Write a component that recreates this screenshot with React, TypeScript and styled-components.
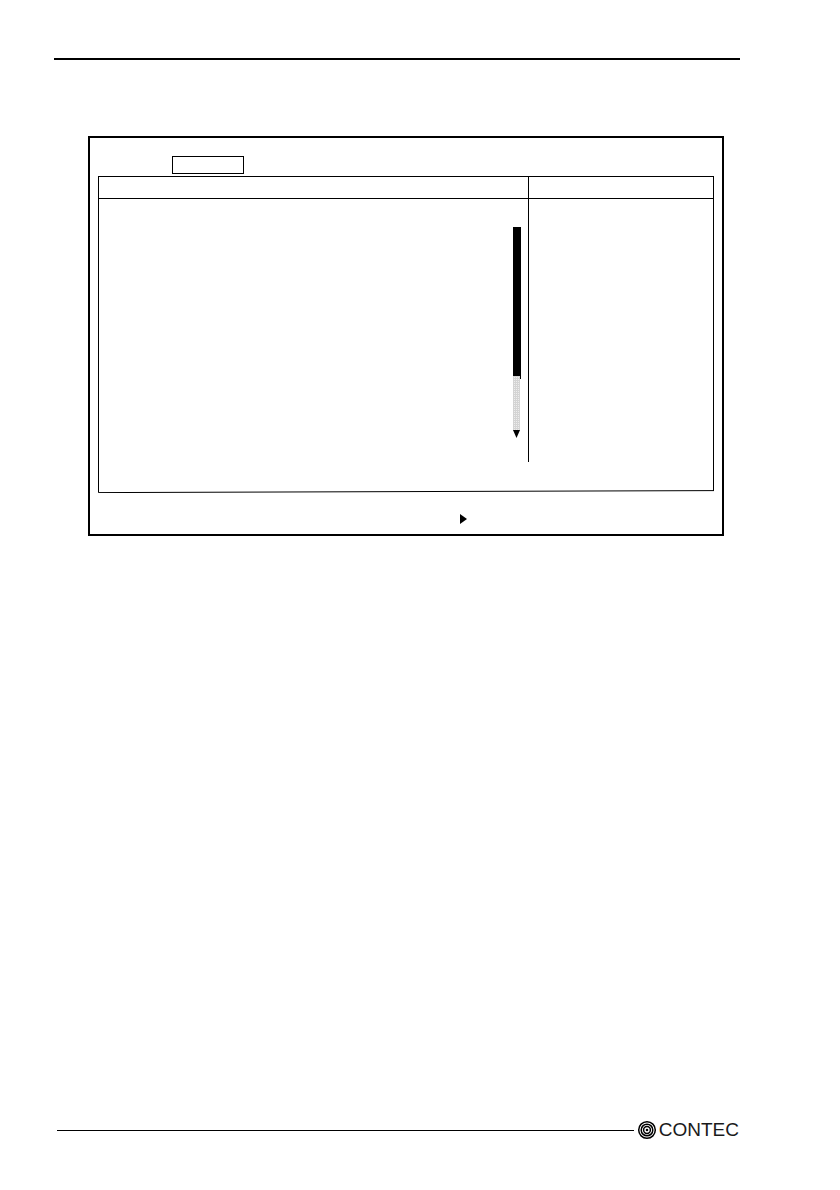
import React from "react";
import styled, { createGlobalStyle } from "styled-components";

const GlobalStyle = createGlobalStyle`
  body {
    margin: 0;
    background: #fff;
    color: #000;
    font-family: "Liberation Sans", Arial, sans-serif;
  }
`;

const Page = styled.div`
  box-sizing: border-box;
  min-height: 100vh;
  padding: 58px 100px 48px 54px;
  display: flex;
  flex-direction: column;
`;

const TopRule = styled.hr`
  width: 100%;
  height: 2px;
  margin: 0;
  border: 0;
  background: #000;
`;

const Screen = styled.main`
  margin: 76px 16px 0 34px;
  padding: 18px 8px 10px;
  border: 2px solid #000;
`;

const TabBar = styled.nav`
  display: flex;
  padding: 0 74px 2px;
`;

const Tab = styled.button`
  width: 72px;
  height: 18px;
  padding: 0;
  border: 1px solid #000;
  background: #fff;
`;

const Panel = styled.section`
  border: 1px solid #000;
  border-bottom: 0;
  padding-bottom: 29px;
`;

const Columns = styled.div<{ $ruled?: boolean }>`
  display: grid;
  grid-template-columns: minmax(0, 1fr) 184px;
  min-height: ${(p) => (p.$ruled ? 21 : 263)}px;
  border-bottom: ${(p) => (p.$ruled ? "1px solid #000" : "0")};
`;

const Settings = styled.div`
  display: flex;
  justify-content: flex-end;
  align-items: flex-start;
  padding: 28px 7px 0 0;
  border-right: 1px solid #000;
`;

const Title = styled.div`
  border-right: 1px solid #000;
`;

const Help = styled.aside``;

const PanelEdge = styled.svg`
  display: block;
  width: 100%;
  height: 3px;
  margin-top: -1px;
`;

const Legend = styled.footer`
  display: flex;
  padding: 21px 0 0 362px;
`;

const Footer = styled.footer`
  display: flex;
  align-items: center;
  gap: 3px;
  margin-top: auto;
  padding: 0 1px 0 3px;
`;

const FooterRule = styled.hr`
  flex: 1;
  height: 1px;
  margin: 0;
  border: 0;
  background: #000;
`;

const Brand = styled.div`
  display: flex;
  align-items: center;
  gap: 2px;
  color: #1a1a1a;
  font-size: 19px;
  line-height: 24px;
`;

function ScrollBar() {
  return (
    <svg width="9" height="212" viewBox="0 0 9 212" aria-hidden="true">
      <defs>
        <pattern id="dots" width="2" height="2" patternUnits="userSpaceOnUse">
          <rect width="2" height="2" fill="#d4d4d4" />
          <rect width="1" height="1" fill="#eee" />
        </pattern>
      </defs>
      <path d="M1 0h8v152H1z" />
      <path d="M1 149h7v55H1z" fill="url(#dots)" />
      <path d="M1 203h7l-3.5 8z" />
    </svg>
  );
}

function Rings() {
  return (
    <svg width="20" height="20" viewBox="0 0 20 20" aria-hidden="true">
      <g fill="none" stroke="#000" strokeWidth="1.5">
        <circle cx="10" cy="10" r="8.3" />
        <circle cx="10" cy="10" r="5.8" />
        <circle cx="10" cy="10" r="3.4" />
      </g>
      <circle cx="10" cy="10" r="1.3" />
    </svg>
  );
}

export default function App() {
  return (
    <Page>
      <GlobalStyle />
      <TopRule />
      <Screen>
        <TabBar>
          <Tab type="button" aria-label="Selected menu" />
        </TabBar>
        <Panel>
          <Columns $ruled>
            <Title />
            <Help />
          </Columns>
          <Columns>
            <Settings>
              <ScrollBar />
            </Settings>
            <Help />
          </Columns>
        </Panel>
        <PanelEdge viewBox="0 0 616 3" preserveAspectRatio="none" aria-hidden="true">
          <path d="M0.5 0V2.6L616 0.6" fill="none" stroke="#000" strokeWidth="1" />
        </PanelEdge>
        <Legend>
          <svg width="7" height="10" viewBox="0 0 7 10" aria-hidden="true">
            <path d="M0 0l7 5-7 5z" />
          </svg>
        </Legend>
      </Screen>
      <Footer>
        <FooterRule />
        <Brand>
          <Rings />
          <span>CONTEC</span>
        </Brand>
      </Footer>
    </Page>
  );
}
